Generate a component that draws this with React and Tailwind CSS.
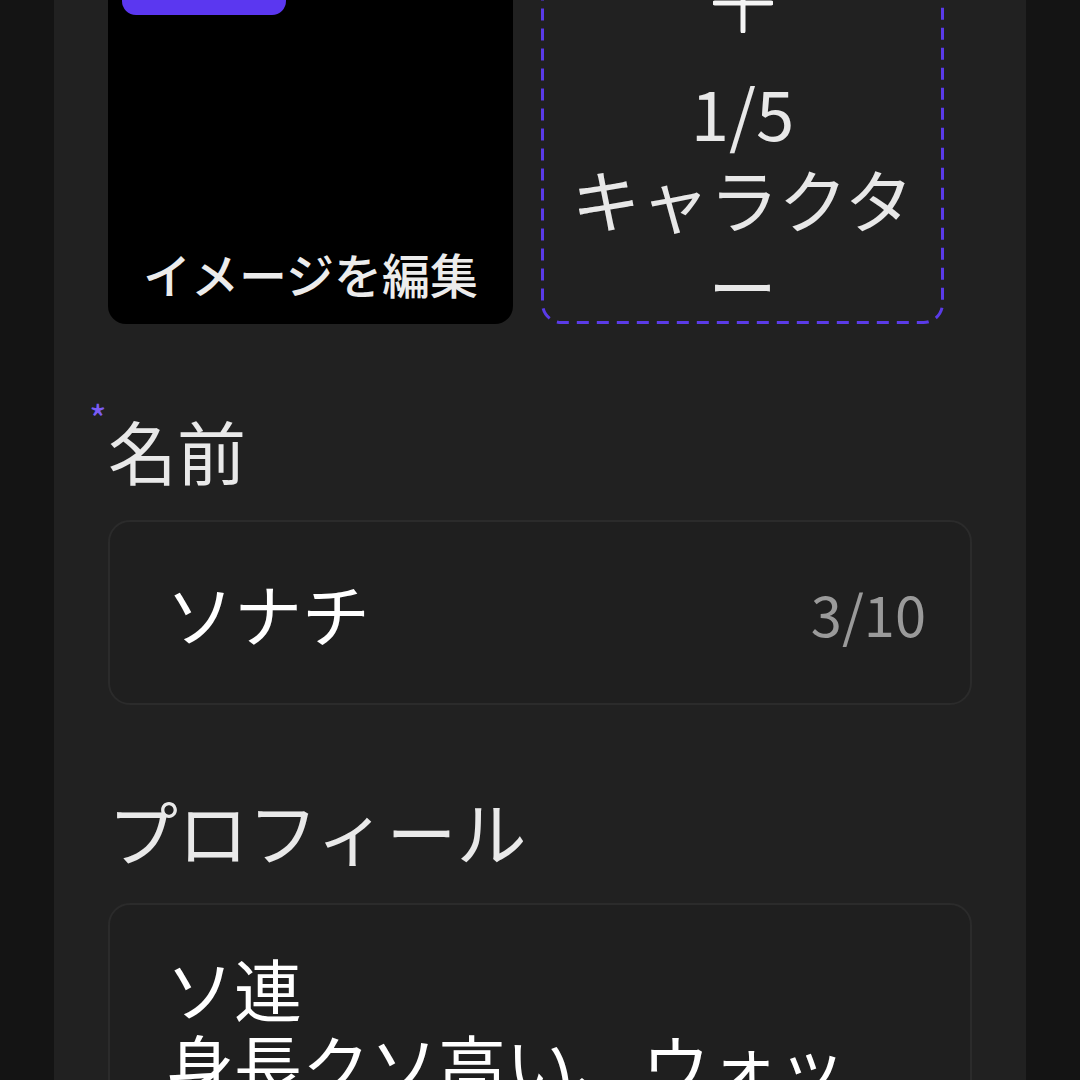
import React from "react";

const font = "font-['Noto_Sans_CJK_JP','Noto_Sans',sans-serif]";

function PlusIcon() {
  return (
    <svg className="shrink-0" width="60" height="60" viewBox="0 0 60 60" fill="none">
      <path d="M30 2v56M2 30h56" stroke="#f5f5f5" strokeWidth="5" strokeLinecap="round" />
    </svg>
  );
}

function ImageCard() {
  return (
    <div className="relative w-[405px] h-[405px] shrink-0 rounded-[18px] bg-black overflow-hidden">
      {/* badge, mostly scrolled out of view */}
      <div className="absolute top-[14px] left-[14px] w-[164px] h-[82px] rounded-[14px] bg-[#5b37f0]" />
      <div className="absolute inset-x-0 bottom-[27px] text-center text-[48px] leading-[48px] font-medium text-[#ececec]">
        イメージを編集
      </div>
    </div>
  );
}

function AddCard() {
  return (
    <div className="relative w-[403px] h-[405px] shrink-0 flex flex-col items-center pt-[54px]">
      <svg className="absolute inset-0 pointer-events-none" width="403" height="405" fill="none">
        <rect x="1.5" y="1.5" width="400" height="402" rx="19" stroke="#5a3be8" strokeWidth="3" strokeDasharray="12 8" />
      </svg>
      <PlusIcon />
      <div className="shrink-0 mt-[35px] text-center text-[69px] leading-[87px] text-[#e8e8e8]">
        <div>1/5</div>
        <div>キャラクタ</div>
        <div>ー</div>
      </div>
    </div>
  );
}

export default function App() {
  const name = "ソナチ";

  return (
    <div className={`h-[1080px] overflow-hidden bg-[#141414] flex justify-center ${font}`}>
      <div className="w-[972px] h-full bg-[#212121] px-[54px]">
        <div className="-mt-[81px] flex gap-[28px]">
          <ImageCard />
          <AddCard />
        </div>

        {/* name */}
        <div className="mt-[83px] relative">
          <span className="absolute -left-[19px] -top-[8px] text-[38px] leading-[38px] text-[#7b5cf5]">*</span>
          <div className="text-[69px] leading-[86px] text-[#e9e9e9]">名前</div>
        </div>
        <div className="mt-[27px] h-[185px] rounded-[22px] border-2 border-[#2b2b2b] bg-[#1f1f1f] flex items-center justify-between pl-[56px] pr-[44px]">
          <span className="text-[68px] text-white">{name}</span>
          <span className="text-[56px] text-[#9a9a9a]">{name.length}/10</span>
        </div>

        {/* profile */}
        <div className="mt-[83px] text-[70px] leading-[86px] text-[#e9e9e9]">プロフィール</div>
        <div className="mt-[29px] h-[400px] rounded-[22px] border-2 border-[#2b2b2b] bg-[#1f1f1f] pl-[56px] pr-[82px] pt-[45px]">
          <div className="text-[68px] leading-[76px] text-white">
            <div>ソ連</div>
            <div>身長クソ高い、ウォッカ好き</div>
          </div>
        </div>
      </div>
    </div>
  );
}
